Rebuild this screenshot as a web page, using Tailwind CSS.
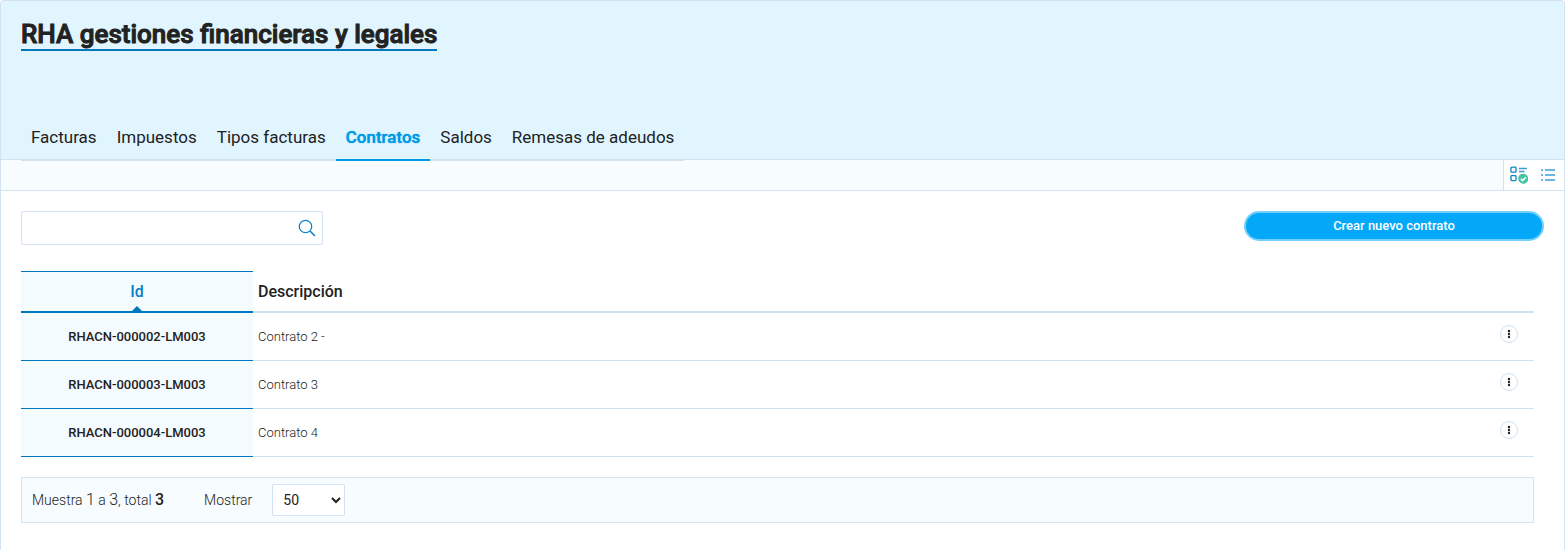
<!DOCTYPE html>
<html lang="es">
<head>
<meta charset="utf-8">
<meta name="viewport" content="width=device-width, initial-scale=1">
<title>Contratos</title>
<script src="https://cdn.jsdelivr.net/npm/@tailwindcss/browser@4"></script>
</head>
<body class="bg-white font-[Roboto,sans-serif] text-[#222]">
<div class="min-h-screen rounded-t border-x border-t border-[#d3e1f0]">
  <header class="flex flex-col rounded-t bg-[#e1f5fe] px-5 pt-[18px]">
    <h1 class="w-fit border-b-2 border-[#0078be] text-[26px] leading-[30px] font-medium [-webkit-text-stroke:1px]">RHA gestiones financieras y legales</h1>
    <nav class="relative z-10 mt-[62px] -mb-0.5 flex w-fit border-b-2 border-[#d3e1ec] pt-2 text-[17px] leading-6">
      <a href="#" class="-mb-0.5 px-2.5 pt-1 pb-2.5">Facturas</a>
      <a href="#" class="-mb-0.5 px-2.5 pt-1 pb-2.5">Impuestos</a>
      <a href="#" class="-mb-0.5 px-2.5 pt-1 pb-2.5">Tipos facturas</a>
      <a href="#" aria-current="page" class="-mb-0.5 border-b-2 border-[#0099e5] px-2.5 pt-1 pb-2.5 font-medium text-[#0099e5] [text-shadow:0_0_1px_#0099e5]">Contratos</a>
      <a href="#" class="-mb-0.5 px-2.5 pt-1 pb-2.5">Saldos</a>
      <a href="#" class="-mb-0.5 px-2.5 pt-1 pb-2.5">Remesas de adeudos</a>
    </nav>
  </header>
  <div class="flex h-8 justify-end border-y border-[#d3e1f0] bg-[#f7fcff]">
    <div class="flex items-center gap-3 border-l border-[#d3e1f0] bg-white pr-2 pl-1.5">
      <button type="button" aria-label="Vista de detalle">
        <svg class="block" width="18" height="18" viewBox="0 0 18 18" fill="none" stroke="#0a84c8" stroke-width="1.3">
          <rect x="1" y="1.2" width="5" height="5" rx=".8"/><rect x="1" y="9.6" width="5" height="5" rx=".8"/>
          <path d="M9 2.500h8M9 5.500h5.500M9 10.500h3" stroke="#3b9dd6"/>
          <circle cx="13.200" cy="12.800" r="5" fill="#45c4a0" stroke="none"/>
          <path d="M10.800 12.800l1.800 1.800 3.200-3.300" stroke="#fff" stroke-width="1.500"/>
        </svg>
      </button>
      <button type="button" aria-label="Vista de lista">
        <svg class="block" width="16" height="16" viewBox="0 0 16 16" stroke="#3ba0d9" stroke-width="1.500">
          <path d="M1 3h2M1 8h2M1 13h2M5 3h10M5 8h10M5 13h10"/>
        </svg>
      </button>
    </div>
  </div>
  <main class="px-5 pt-5">
    <div class="flex items-start justify-between">
      <form class="flex h-[34px] w-[302px] items-center rounded-xs border border-[#d3e1f0] bg-white pr-1.5">
        <input type="search" aria-label="Buscar" class="h-full min-w-0 flex-1 px-2 text-sm outline-none">
        <button type="submit" aria-label="Buscar">
          <svg class="block" width="18" height="18" viewBox="0 0 18 18" fill="none" stroke="#0a84c8" stroke-width="1.300"><circle cx="7.500" cy="7.500" r="6.200"/><path d="M12 12l5 5" stroke-width="1.600"/></svg>
        </button>
      </form>
      <button type="button" class="h-[30px] w-[300px] rounded-full border-2 border-[#73cffa] bg-[#03a9f8] text-[13px] leading-4 font-medium text-white">Crear nuevo contrato</button>
    </div>
    <div class="mt-[26px] mr-2.5">
      <table class="w-full border-separate border-spacing-0 text-left text-[13px]">
        <thead>
          <tr class="h-[42px] text-base">
            <th scope="col" class="relative w-[232px] border-t border-b-2 border-[#0078be] bg-[#f3fbff] text-center font-medium text-[#0a7fc6]">Id
              <svg class="absolute bottom-0 left-1/2 -ml-[5px]" width="10" height="5" viewBox="0 0 10 5" fill="#0078be"><path d="M0 5L5 0l5 5z"/></svg>
            </th>
            <th scope="col" class="border-t border-b-2 border-t-transparent border-b-[#d3e1ec] px-[5px] font-medium">Descripción</th>
            <td class="w-16 border-b-2 border-[#d3e1ec]"></td>
          </tr>
        </thead>
        <tbody>
          <tr class="h-12">
            <th scope="row" class="border-b border-[#0078be] bg-[#f3fbff] text-center font-medium">RHACN-000002-LM003</th>
            <td class="border-b border-[#d3e1ec] px-[5px] font-light">Contrato 2 -</td>
            <td class="border-b border-[#d3e1ec] pr-4 pb-1.5"><button type="button" aria-label="Opciones" class="ml-auto flex size-[18px] items-center justify-center rounded-full border border-[#d3e1f0]"><svg width="4" height="10" viewBox="0 0 4 10" fill="#222"><circle cx="2" cy="2" r="1.200"/><circle cx="2" cy="5" r="1.200"/><circle cx="2" cy="8" r="1.200"/></svg></button></td>
          </tr>
          <tr class="h-12">
            <th scope="row" class="border-b border-[#0078be] bg-[#f3fbff] text-center font-medium">RHACN-000003-LM003</th>
            <td class="border-b border-[#d3e1ec] px-[5px] font-light">Contrato 3</td>
            <td class="border-b border-[#d3e1ec] pr-4 pb-1.5"><button type="button" aria-label="Opciones" class="ml-auto flex size-[18px] items-center justify-center rounded-full border border-[#d3e1f0]"><svg width="4" height="10" viewBox="0 0 4 10" fill="#222"><circle cx="2" cy="2" r="1.200"/><circle cx="2" cy="5" r="1.200"/><circle cx="2" cy="8" r="1.200"/></svg></button></td>
          </tr>
          <tr class="h-12">
            <th scope="row" class="border-b border-[#0078be] bg-[#f3fbff] text-center font-medium">RHACN-000004-LM003</th>
            <td class="border-b border-[#d3e1ec] px-[5px] font-light">Contrato 4</td>
            <td class="border-b border-[#d3e1ec] pr-4 pb-1.5"><button type="button" aria-label="Opciones" class="ml-auto flex size-[18px] items-center justify-center rounded-full border border-[#d3e1f0]"><svg width="4" height="10" viewBox="0 0 4 10" fill="#222"><circle cx="2" cy="2" r="1.200"/><circle cx="2" cy="5" r="1.200"/><circle cx="2" cy="8" r="1.200"/></svg></button></td>
          </tr>
        </tbody>
      </table>
      <div class="mt-5 flex h-[46px] items-center border border-[#d3e1f0] bg-[#f7fcff] px-2.5 text-sm font-light">
        <p>Muestra <span class="text-base">1</span> a <span class="text-base">3</span>, total <b class="text-base font-medium">3</b></p>
        <label for="page-size" class="ml-10">Mostrar</label>
        <select id="page-size" class="ml-5 h-8 w-[73px] rounded-xs border border-[#d3e1f0] bg-white pl-1.5 text-sm font-normal">
          <option>10</option><option>25</option><option selected>50</option><option>100</option>
        </select>
      </div>
    </div>
  </main>
</div>
</body>
</html>
